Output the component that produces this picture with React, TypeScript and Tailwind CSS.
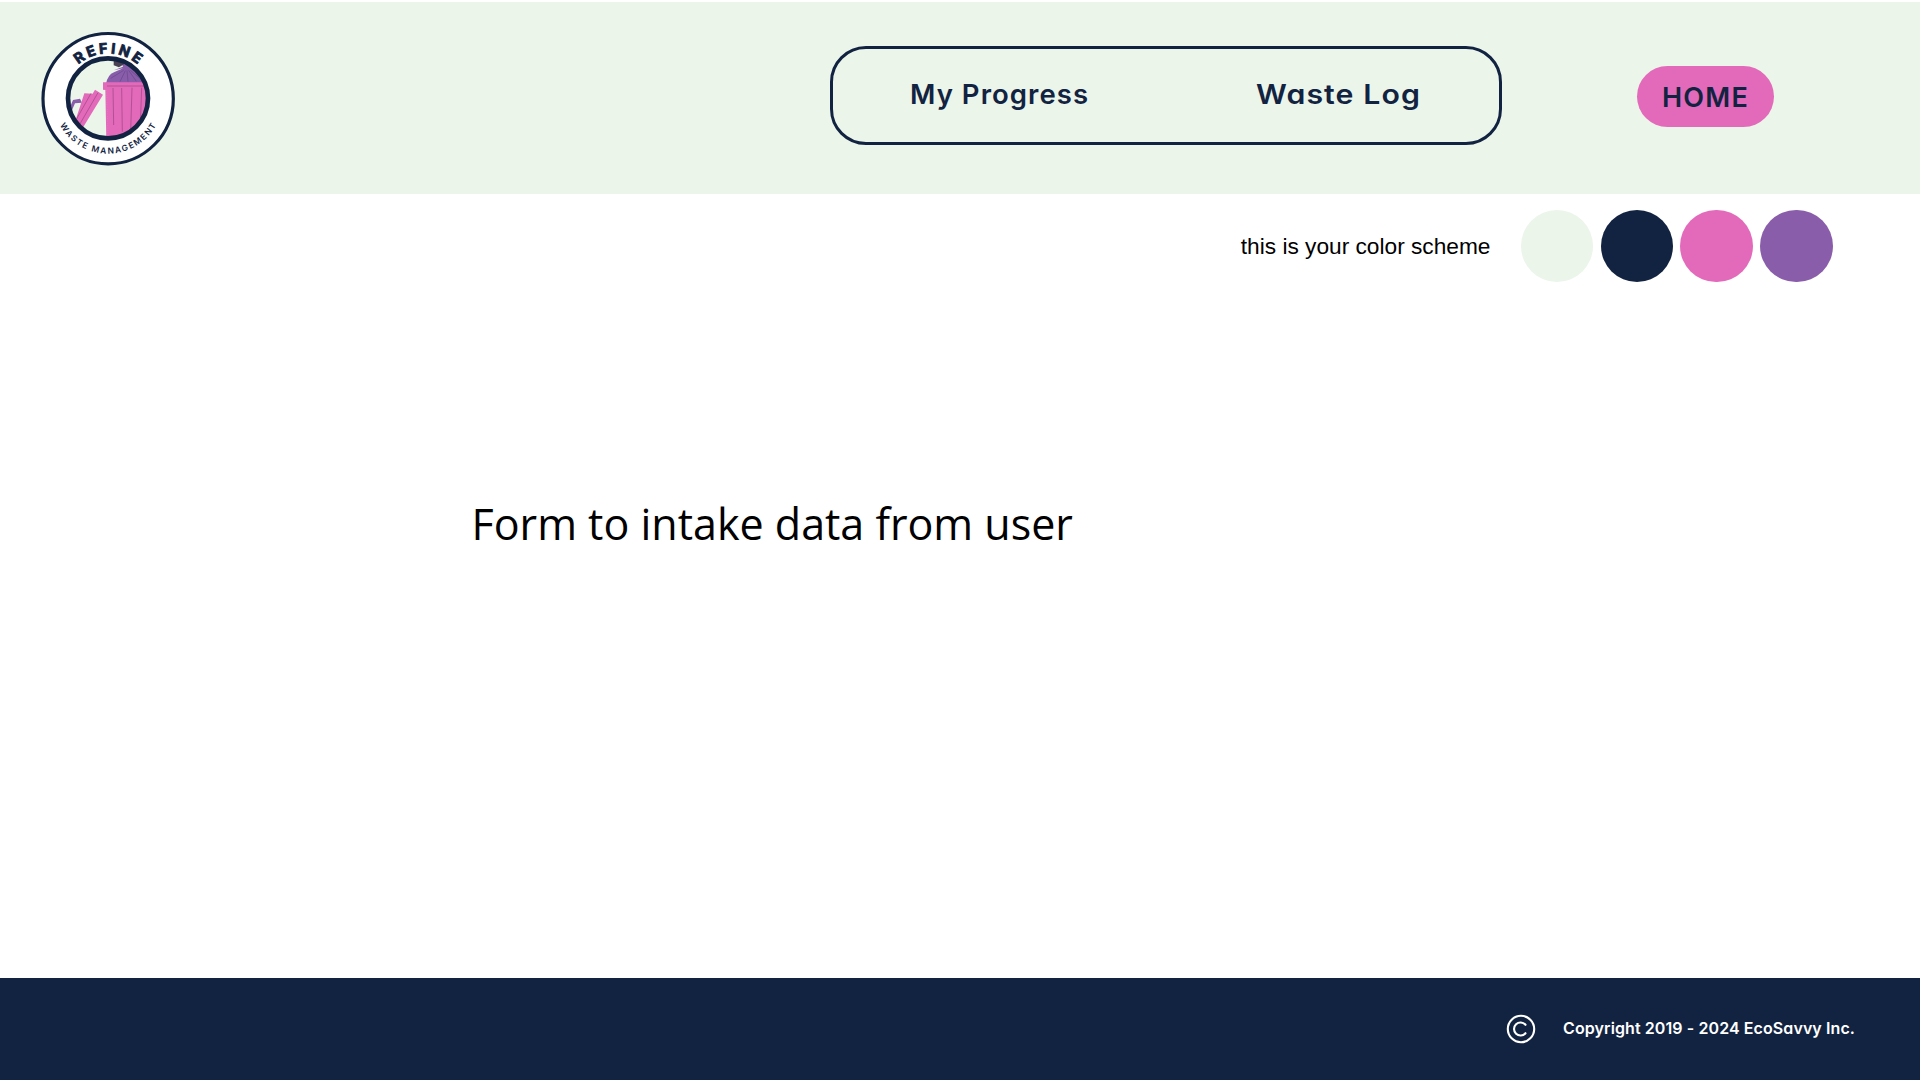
const navy = '#122341';
const pink = '#e36aba';
const purple = '#8a5dab';

function Logo() {
  return (
    <svg viewBox="0 0 480 480" className="ml-[30px] mt-[18px] h-40 w-40 shrink-0" role="img" aria-label="Refine Waste Management">
      <defs>
        <clipPath id="bin-window">
          <circle cx="234" cy="235" r="117" />
        </clipPath>
        <path id="top-arc" d="M98 236 A136 136 0 0 1 370 236" />
        <path id="bottom-arc" d="M69 236 A165 165 0 0 0 399 236" />
      </defs>
      <circle cx="234.500" cy="236" r="195.500" fill="#fff" stroke={navy} strokeWidth="9.500" />
      <circle cx="234" cy="235" r="120" fill="#ebf5ea" />
      <g clipPath="url(#bin-window)">
        <path d="M112 280 L129 240 L150 236 L156 248 L135 250 L122 280Z" fill={purple} />
        <path d="M228 192 Q233 164 252 157 L279 145 L251 151 L279 140 L272 120 L310 118 L360 160 V192Z" fill={purple} />
        <path d="M251 121 L275 122 L283 132 L267 142 L251 136Z" fill="#494052" />
        <path d="M281 151 L242 175 M286 152 L270 185 M291 151 L294 185 M296 151 L319 184 M301 151 L340 184" stroke="#59407f" strokeWidth="1.500" fill="none" />
        <path d="M132 315 L163 220 L188 221 L195 209 L219 224 L142 350Z" fill={pink} />
        <path d="M183 220 L137 302 M204 218 L144 322" stroke="#97467f" strokeWidth="2" />
        <path d="M219 187 H360 V360 H229 L226 210 L219 209Z" fill={pink} />
        <path d="M231 198 H342 M249 204 L251 315 M275 204 L277 335 M306 203 L302 335 M335 203 L331 315" stroke="#97467f" strokeWidth="2" fill="none" />
        <path d="M230 211 L234 348" stroke="#f17fc8" strokeWidth="2" strokeDasharray="2 5" />
      </g>
      <circle cx="234" cy="235" r="120" fill="none" stroke={navy} strokeWidth="14" />
      <text fill={navy} stroke={navy} strokeWidth="2.500" strokeLinejoin="round" fontFamily="Inter, sans-serif" fontSize="43" fontWeight="700">
        <textPath href="#top-arc" startOffset="50%" textAnchor="middle" textLength="194">REFINE</textPath>
      </text>
      <text fill={navy} strokeLinejoin="round" fontFamily="Inter, sans-serif" fontSize="25" fontWeight="600">
        <textPath href="#bottom-arc" startOffset="50%" textAnchor="middle" textLength="352">WASTE MANAGEMENT</textPath>
      </text>
    </svg>
  );
}

export default function App() {
  return (
    <div className="flex h-[1080px] w-[1920px] flex-col overflow-hidden bg-white pt-[2px] font-['Inter',sans-serif] text-[#122341]">
      <header className="flex h-48 shrink-0 items-start bg-[#ebf5ea]">
        <Logo />
        <nav className="ml-[640px] mt-[44px] flex h-[99px] w-[672px] justify-between rounded-[36px] border-3 border-[#122341] pl-[77px] pr-[78px] pt-[25px] text-[27.500px] leading-10 font-semibold whitespace-nowrap [font-feature-settings:'cv11']">
          <a className="tracking-[1.05px]">My Progress</a>
          <a className="origin-right scale-x-[1.1] tracking-[1px]">Waste Log</a>
        </nav>
        <a className="ml-[135px] mt-[63.500px] flex h-[61.500px] w-[137px] items-center justify-center rounded-full bg-[#e36aba] pt-[4px] text-[27px] font-semibold tracking-[1.2px]">HOME</a>
      </header>
      <main className="flex grow flex-col">
        <section className="flex h-[104px] items-center justify-end pr-[87.500px]">
          <p className="mr-[30.500px] font-['Liberation_Sans',sans-serif] text-[22.7px] text-black">this is your color scheme</p>
          <div className="flex gap-[7.2px]">
            <span className="h-[72.500px] w-[72.500px] rounded-full bg-[#ebf5ea]" />
            <span className="h-[72.500px] w-[72.500px] rounded-full bg-[#122341]" />
            <span className="h-[72.500px] w-[72.500px] rounded-full bg-[#e36aba]" />
            <span className="h-[72.500px] w-[72.500px] rounded-full bg-[#8a5dab]" />
          </div>
        </section>
        <h1 className="ml-[471.500px] mt-[196px] font-['Open_Sans',sans-serif] text-[43px] leading-[60px] font-normal text-black">Form to intake data from user</h1>
      </main>
      <footer className="flex h-[102px] shrink-0 items-center justify-end bg-[#122341] pr-[65px] pb-px text-white">
        <svg viewBox="0 0 30 30" className="mr-[27px] h-[30px] w-[30px]" fill="none" stroke="white" strokeWidth="2.100" strokeLinecap="round">
          <circle cx="15" cy="15" r="13.200" />
          <path d="M19.500 10.800 A6.500 6.500 0 1 0 19.500 19.200" />
        </svg>
        <p className="pb-[2px] text-base font-semibold tracking-[0.09px] [font-feature-settings:'cv11']">Copyright 2019 - 2024 EcoSavvy Inc.</p>
      </footer>
    </div>
  );
}
